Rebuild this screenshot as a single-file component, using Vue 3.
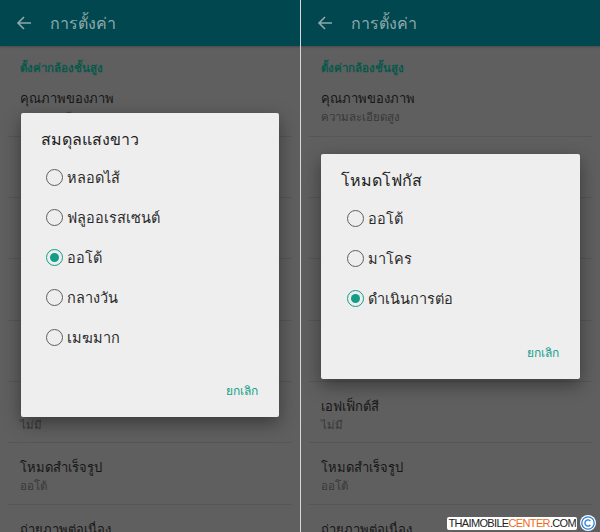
<script setup>
const panels = [
  {
    id: 'left',
    title: 'สมดุลแสงขาว',
    options: ['หลอดไส้', 'ฟลูออเรสเซนต์', 'ออโต้', 'กลางวัน', 'เมฆมาก'],
    selected: 2,
    subtitle: 'ความละเอียดสูง'
  },
  {
    id: 'right',
    title: 'โหมดโฟกัส',
    options: ['ออโต้', 'มาโคร', 'ดำเนินการต่อ'],
    selected: 2,
    subtitle: 'ความละเอียดสูง'
  }
]
const blanks = [1, 2, 3, 4]
</script>

<template>
  <div class="screen">
    <section v-for="p in panels" :key="p.id" class="panel" :class="p.id">
      <header class="bar">
        <svg class="back" width="16" height="16" viewBox="0 0 16 16" fill="none" stroke="#8fa9ab" stroke-width="1.6">
          <path d="M15 8H2M8 2 2 8l6 6" />
        </svg>
        <span class="bar-title">การตั้งค่า</span>
      </header>
      <div class="list">
        <div class="section">ตั้งค่ากล้องชั้นสูง</div>
        <div class="row first">
          <div class="name">คุณภาพของภาพ</div>
          <div class="sub">{{ p.subtitle }}</div>
        </div>
        <div v-for="b in blanks" :key="b" class="row"></div>
        <div class="row">
          <div class="name">เอฟเฟ็กต์สี</div>
          <div class="sub">ไม่มี</div>
        </div>
        <div class="row">
          <div class="name">โหมดสำเร็จรูป</div>
          <div class="sub">ออโต้</div>
        </div>
        <div class="row last">
          <div class="name">ถ่ายภาพต่อเนื่อง</div>
        </div>
      </div>
      <div class="dialog">
        <div class="d-title">{{ p.title }}</div>
        <div class="options">
          <div v-for="(o, i) in p.options" :key="o" class="option">
            <span class="radio" :class="{ on: i === p.selected }"></span>
            <span>{{ o }}</span>
          </div>
        </div>
        <div class="actions"><span class="cancel">ยกเลิก</span></div>
      </div>
    </section>
    <div class="mark">
      <span class="mark-text">THAIMOBILE<b>CENTER</b>.COM</span>
      <svg width="16" height="16" viewBox="0 0 16 16" fill="none">
        <circle cx="8" cy="8" r="8" fill="#fff" />
        <circle cx="8" cy="8" r="6.2" stroke="#2a7fd6" stroke-width="1.3" />
        <path d="M10.4 6a3.1 3.1 0 1 0 0 4" stroke="#2a7fd6" stroke-width="1.3" />
      </svg>
    </div>
  </div>
</template>

<style>
html, body { margin: 0; padding: 0; background: #d8d8d8; }
</style>

<style scoped>
.screen {
  position: relative;
  width: 600px;
  height: 532px;
  display: flex;
  gap: 1px;
  overflow: hidden;
  font-family: "Roboto", "Noto Sans", "DejaVu Sans", sans-serif;
}
.panel {
  position: relative;
  min-width: 0;
  background: #5f5f5f;
  overflow: hidden;
}
.panel.left { width: 300px; }
.panel.right { width: 299px; }
.bar {
  height: 46px;
  background: #00474f;
  box-shadow: 0 1px 2px rgba(0, 0, 0, .25);
  display: flex;
  align-items: center;
  padding-left: 16px;
  gap: 18px;
  box-sizing: border-box;
}
.back { flex: none; }
.bar-title { color: #8fa9ab; font-size: 16px; }
.list { padding: 0 20px; }
.section {
  color: #07584c;
  font-size: 11.5px;
  font-weight: 700;
  line-height: 16px;
  padding-top: 14px;
}
.row {
  height: 61.4px;
  box-sizing: border-box;
  border-bottom: 1px solid #565656;
  padding-top: 15px;
  margin: 0 -12px;
  padding-left: 12px;
}
.row.first { height: 60.5px; padding-top: 13px; }
.name { color: #161616; font-size: 13px; line-height: 20px; font-weight: 500; }
.sub { color: #383838; font-size: 11.5px; line-height: 16px; }
.dialog {
  position: absolute;
  background: #eeeeee;
  border-radius: 2px;
  box-shadow: 0 6px 18px rgba(0, 0, 0, .4);
  box-sizing: border-box;
  padding: 15px 20px 0;
  display: flex;
  flex-direction: column;
  color: #2b2b2b;
}
.left .dialog { left: 21px; top: 113px; width: 258px; height: 304px; }
.right .dialog { left: 20px; top: 154px; width: 259px; height: 225px; }
.d-title { font-size: 16px; line-height: 24px; color: #1f1f1f; }
.options { margin-top: 5px; }
.option {
  display: flex;
  align-items: center;
  gap: 4px;
  height: 40px;
  margin-left: 5px;
  font-size: 14.5px;
  color: #2b2b2b;
}
.right .option { margin-left: 6px; }
.radio {
  width: 15px;
  height: 15px;
  box-sizing: content-box;
  border-radius: 50%;
  border: 1.5px solid #5e5e5e;
  position: relative;
  flex: none;
}
.radio.on { border-color: #149c87; }
.radio.on::after {
  content: "";
  position: absolute;
  inset: 3px;
  border-radius: 50%;
  background: #149c87;
}
.actions {
  margin-top: auto;
  padding-bottom: 17px;
  padding-right: 1px;
  display: flex;
  justify-content: flex-end;
}
.cancel { color: #14a08b; font-size: 12px; font-weight: 500; }
.mark {
  position: absolute;
  right: 4px;
  bottom: 1px;
  display: flex;
  align-items: center;
  gap: 3px;
}
.mark-text {
  background: #fff;
  border-radius: 2px;
  padding: 1px 1px;
  font-family: "Liberation Sans", Arial, sans-serif;
  font-size: 11px;
  line-height: 11px;
  letter-spacing: -.65px;
  color: #222;
}
.mark-text b { color: #ef6b1a; font-weight: 400; }
</style>
